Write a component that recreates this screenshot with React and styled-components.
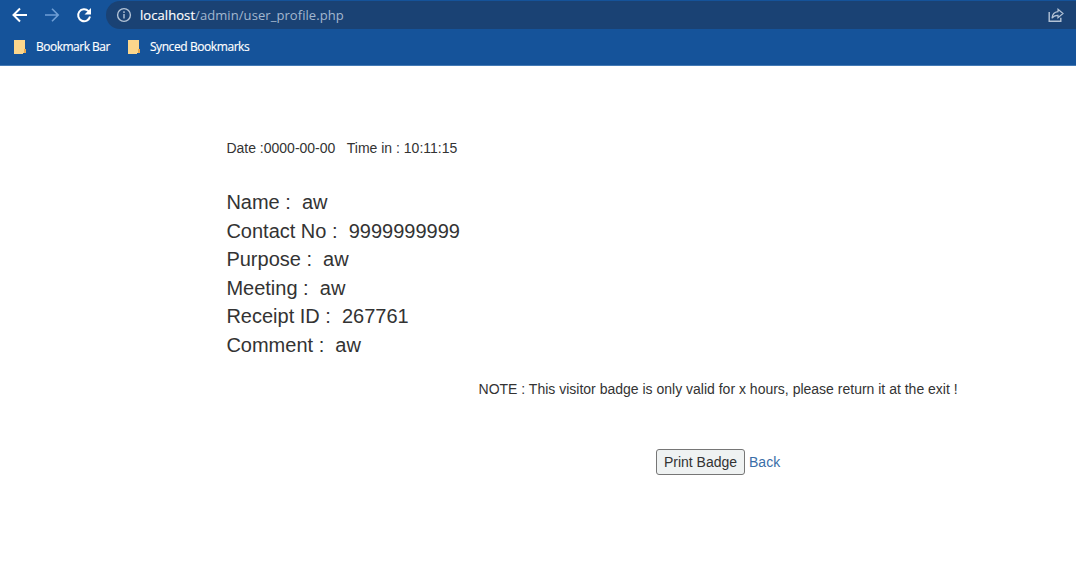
import React from 'react';
import styled, { createGlobalStyle } from 'styled-components';

const GlobalStyle = createGlobalStyle`
  * {
    box-sizing: border-box;
  }

  body {
    margin: 0;
    background: #fff;
    overflow: hidden;
  }
`;

const BrowserBar = styled.header`
  height: 66px;
  background: #15539a;
  border-bottom: 1px solid #447ab5;
  font-family: 'Open Sans', 'Noto Sans', sans-serif;
`;

const Toolbar = styled.div`
  display: flex;
  align-items: center;
  height: 30px;
  padding-left: 12px;
`;

const NavIcon = styled.svg`
  width: 16px;
  height: 16px;
  margin-right: 16px;
  flex: none;
  fill: none;
  stroke: ${(props) => (props.$muted ? '#6f9fd6' : '#fff')};
  stroke-width: ${(props) => (props.$muted ? 1.6 : 2)};
`;

const AddressBar = styled.div`
  display: flex;
  align-items: center;
  flex: 1;
  height: 28px;
  margin-left: -2px;
  padding: 0 12px 0 10px;
  background: #1a4274;
  border-radius: 14px 0 0 14px;
`;

const AddressIcon = styled.svg`
  width: 16px;
  height: 16px;
  flex: none;
  fill: none;
  stroke: #b3c3d6;
  stroke-width: 1.4;
`;

const Url = styled.div`
  flex: 1;
  margin-left: 8px;
  font-size: 13px;
  line-height: 18px;
  letter-spacing: 0.07px;
  color: #a3b7cf;

  span {
    color: #fff;
    -webkit-text-stroke: 0.15px #fff;
  }
`;

const Bookmarks = styled.nav`
  display: flex;
  align-items: center;
  gap: 18px;
  height: 34px;
  padding-left: 14px;
`;

const Bookmark = styled.div`
  display: flex;
  align-items: center;
  gap: 9px;
  font-size: 12px;
  line-height: 16px;
  letter-spacing: ${(props) => props.$spacing || 0};
  color: #fff;
  -webkit-text-stroke: 0.15px #fff;
  white-space: nowrap;
`;

const FolderIcon = styled.svg`
  width: 13px;
  height: 14px;
  flex: none;
`;

const Page = styled.main`
  padding: 72px 0 0 226.4px;
  font-family: 'Liberation Sans', Arial, sans-serif;
  font-size: 14px;
  line-height: 20px;
  color: #333;
`;

const VisitTime = styled.div`
  white-space: pre;
`;

const Details = styled.div`
  margin-top: 30px;
  font-size: 20px;
  line-height: 28.57px;
`;

const Detail = styled.div`
  white-space: pre;
`;

const Footer = styled.div`
  display: flex;
  flex-direction: column;
  align-items: center;
  margin: 20px 0 0 133.8px;
`;

const Actions = styled.div`
  display: flex;
  align-items: center;
  gap: 4px;
  margin-top: 50px;
`;

const PrintButton = styled.button`
  width: 89px;
  height: 26px;
  padding: 0;
  border: 1px solid #767676;
  border-radius: 3px;
  background: #eff2f2;
  font: inherit;
  color: #333;
`;

const BackLink = styled.a`
  color: #3a6ea8;
  text-decoration: none;
`;

const details = [
  ['Name', 'aw'],
  ['Contact No', '9999999999'],
  ['Purpose', 'aw'],
  ['Meeting', 'aw'],
  ['Receipt ID', '267761'],
  ['Comment', 'aw'],
];

const Folder = () => (
  <FolderIcon viewBox="0 0 13 14">
    <path d="M0 0h11v9h1v4h-3v1H0z" fill="#fbd68c" />
    <path d="M10 9h2v4h-2z" fill="#e9a94f" />
  </FolderIcon>
);

const App = () => (
  <>
    <GlobalStyle />
    <BrowserBar>
      <Toolbar>
        <NavIcon viewBox="0 0 16 16">
          <path d="M15 8H2M8 1.5L1.5 8 8 14.5" />
        </NavIcon>
        <NavIcon viewBox="0 0 16 16" $muted>
          <path d="M1 8h13M8 1.8L14.2 8 8 14.2" />
        </NavIcon>
        <NavIcon viewBox="0 0 16 16">
          <path d="M14 9.5A6 6 0 1 1 12.5 4.1L13.5 5.2" />
          <path d="M15 1v6.5H8.5z" fill="#fff" stroke="none" />
        </NavIcon>
        <AddressBar>
          <AddressIcon viewBox="0 0 16 16">
            <circle cx="8" cy="8" r="6.4" />
            <path d="M8 7v4.5M8 4.3v1.6" />
          </AddressIcon>
          <Url>
            <span>localhost</span>/admin/user_profile.php
          </Url>
          <AddressIcon viewBox="0 0 16 16">
            <path d="M1.2 5v9.3h11.6v-3.5" />
            <path d="M10 2.2L15 6.5 10 10.8V8.3C7 8.2 5.2 9.3 4 11.2 4.3 7.5 6.5 5 10 4.7z" strokeWidth="1.2" />
          </AddressIcon>
        </AddressBar>
      </Toolbar>
      <Bookmarks>
        <Bookmark $spacing="-0.5px">
          <Folder />
          Bookmark Bar
        </Bookmark>
        <Bookmark $spacing="-0.42px">
          <Folder />
          Synced Bookmarks
        </Bookmark>
      </Bookmarks>
    </BrowserBar>
    <Page>
      <VisitTime>{'Date :0000-00-00   Time in : 10:11:15'}</VisitTime>
      <Details>
        {details.map(([label, value]) => (
          <Detail key={label}>{`${label} :  ${value}`}</Detail>
        ))}
      </Details>
      <Footer>
        <div>NOTE : This visitor badge is only valid for x hours, please return it at the exit !</div>
        <Actions>
          <PrintButton>Print Badge</PrintButton>
          <BackLink href="#">Back</BackLink>
        </Actions>
      </Footer>
    </Page>
  </>
);

export default App;
